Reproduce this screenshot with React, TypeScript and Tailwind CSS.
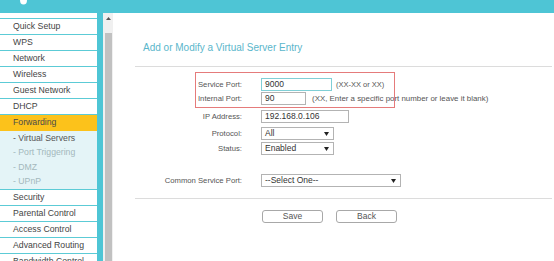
import React from 'react';

const menuTop = ['Quick Setup', 'WPS', 'Network', 'Wireless', 'Guest Network', 'DHCP'];
const subMenu = ['- Virtual Servers', '- Port Triggering', '- DMZ', '- UPnP'];
const menuBottom = ['Security', 'Parental Control', 'Access Control', 'Advanced Routing', 'Bandwidth Control'];

const Arrow: React.FC = () => (
    <svg width="5" height="4" viewBox="0 0 5 4" className="shrink-0">
        <path d="M0 0 L5 0 L2.5 4 Z" fill="#222" />
    </svg>
);

const Select: React.FC<{ value: string; width: string }> = ({ value, width }) => (
    <div className={`${width} h-full border border-[#b3b3b3] bg-white flex items-center justify-between pl-[3px] pr-[4px] text-[8.5px] text-[#333]`}>
        <span>{value}</span>
        <Arrow />
    </div>
);

const App: React.FC = () => {
    return (
        <div className="w-[554px] h-[261px] overflow-hidden bg-white font-['Liberation_Sans',Arial,sans-serif]">
            <div className="h-[13px] bg-[#4ec5d5] relative">
                <svg className="absolute left-[19px] top-0" width="9" height="5" viewBox="0 0 9 5">
                    <path d="M1 0 L8 0 Q8 4.5 4.5 4.5 Q1 4.5 1 0 Z" fill="#fff" />
                </svg>
            </div>
            <div className="flex h-[248px]">
                {/* left menu */}
                <aside className="w-[97px] pt-[5px] text-[8.7px] text-[#444]">
                    <div className="border-t border-[#5ccbd6]">
                        {menuTop.map(item => (
                            <div key={item} className="h-[16px] border-b border-[#5ccbd6] flex items-center pl-[13px]">{item}</div>
                        ))}
                        <div className="h-[16px] bg-[#fcc21b] flex items-center pl-[13px] text-[#4a4a4a]">Forwarding</div>
                        <div className="bg-[#e4f4f7] border-b border-[#5ccbd6]">
                            {subMenu.map((item, i) => (
                                <div key={item} className={`h-[14.5px] flex items-center pl-[13px] ${i === 0 ? 'text-[#555]' : 'text-[#a3b8bc]'}`}>{item}</div>
                            ))}
                        </div>
                        {menuBottom.map(item => (
                            <div key={item} className="h-[16px] border-b border-[#5ccbd6] flex items-center pl-[13px]">{item}</div>
                        ))}
                    </div>
                </aside>
                <div className="w-[6px] bg-[#4ec5d5]" />
                {/* scrollbar */}
                <div className="w-[10px] bg-[#f0f0f0] flex flex-col items-center">
                    <svg className="mt-[4px]" width="5" height="3" viewBox="0 0 5 3">
                        <path d="M0 3 L5 3 L2.5 0 Z" fill="#555" />
                    </svg>
                    <div className="mt-[13px] w-[7px] flex-1 bg-[#c1c1c1]" />
                </div>
                {/* content */}
                <main className="flex-1 pl-[22px] pr-[2px]">
                    <h1 className="mt-[29px] ml-[8px] text-[10px] leading-[12px] text-[#5ab6cb]">Add or Modify a Virtual Server Entry</h1>
                    <div className="mt-[12px] h-px bg-[#dcdcdc]" />
                    <div className="relative pt-[11px] text-[7.7px] text-[#555]">
                        <div className="h-[13px] flex items-center">
                            <span className="w-[107px] text-right">Service Port:</span>
                            <div className="ml-[19px] w-[71px] h-full border border-[#80cfd6] flex items-center pl-[3px] text-[8.5px] text-[#333]">9000</div>
                            <span className="ml-[4px] text-[7.5px]">(XX-XX or XX)</span>
                        </div>
                        <div className="mt-[1px] h-[13px] flex items-center">
                            <span className="w-[107px] text-right">Internal Port:</span>
                            <div className="ml-[19px] w-[45px] h-full border border-[#b3b3b3] flex items-center pl-[3px] text-[8.5px] text-[#333]">90</div>
                            <span className="ml-[6px] text-[7.9px]">(XX, Enter a specific port number or leave it blank)</span>
                        </div>
                        <div className="mt-[5px] h-[13px] flex items-center">
                            <span className="w-[107px] text-right">IP Address:</span>
                            <div className="ml-[19px] w-[88px] h-full border border-[#b3b3b3] flex items-center pl-[3px] text-[8.5px] text-[#333]">192.168.0.106</div>
                        </div>
                        <div className="mt-[4px] h-[13px] flex items-center">
                            <span className="w-[107px] text-right">Protocol:</span>
                            <div className="ml-[19px] h-full"><Select value="All" width="w-[73px]" /></div>
                        </div>
                        <div className="mt-[2px] h-[13px] flex items-center">
                            <span className="w-[107px] text-right">Status:</span>
                            <div className="ml-[19px] h-full"><Select value="Enabled" width="w-[73px]" /></div>
                        </div>
                        <div className="mt-[19px] h-[13px] flex items-center">
                            <span className="w-[107px] text-right">Common Service Port:</span>
                            <div className="ml-[19px] h-full"><Select value="--Select One--" width="w-[140px]" /></div>
                        </div>
                        {/* highlight annotation */}
                        <div className="absolute left-[60px] top-[5px] w-[200px] h-[36px] border-[1.5px] border-[#e57b7b]" />
                    </div>
                    <div className="mt-[11px] h-px bg-[#dcdcdc]" />
                    <div className="mt-[11px] flex pl-[127px] gap-[13px]">
                        <button className="w-[61px] h-[13px] border border-[#a8a8a8] rounded-[3px] bg-white text-[8.5px] leading-none text-[#555]">Save</button>
                        <button className="w-[61px] h-[13px] border border-[#a8a8a8] rounded-[3px] bg-white text-[8.5px] leading-none text-[#555]">Back</button>
                    </div>
                </main>
            </div>
        </div>
    );
};

export default App;
